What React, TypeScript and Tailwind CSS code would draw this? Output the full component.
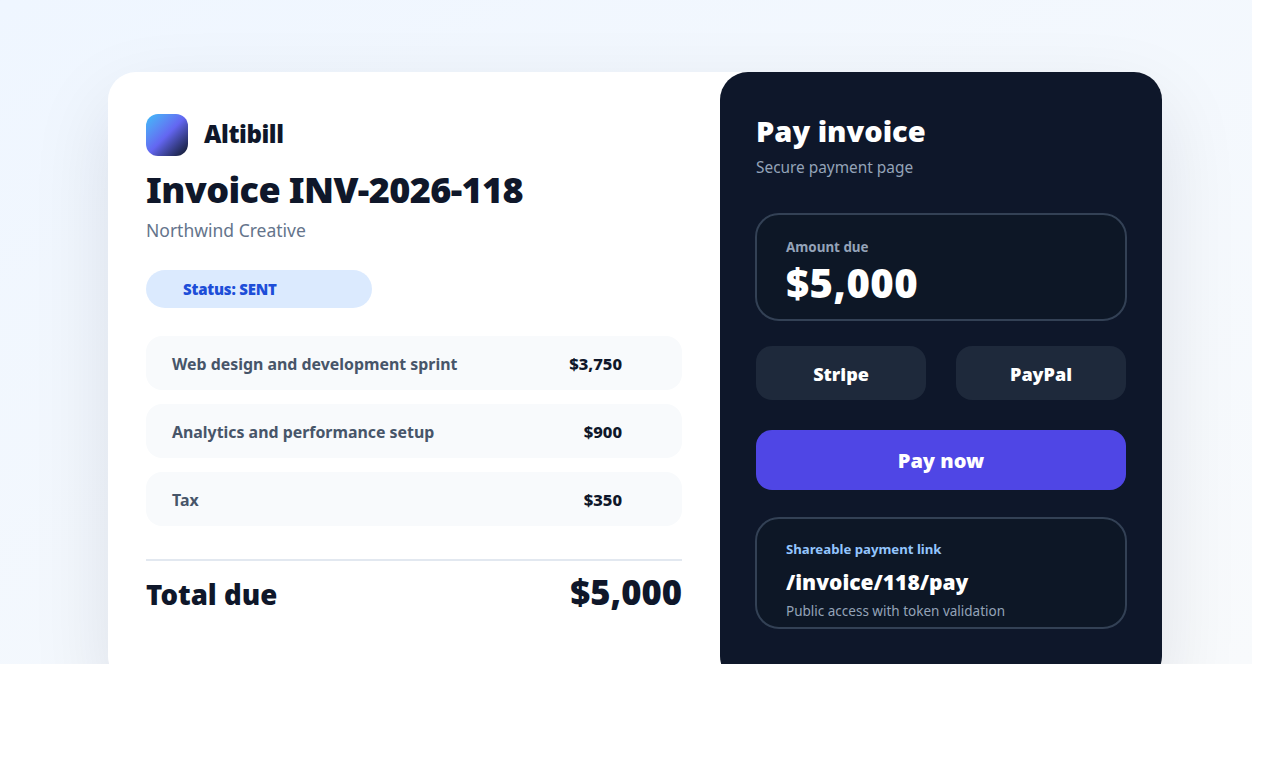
export default function App() {
  const rows = [
    ["Web design and development sprint", "$3,750"],
    ["Analytics and performance setup", "$900"],
    ["Tax", "$350"],
  ];
  return (
    <div className="min-h-[760px] bg-white font-['Noto_Sans',sans-serif]">
      <div className="w-[1252px] h-[664px] overflow-hidden bg-gradient-to-br from-[#eff6ff] to-[#f8fafc] pt-[72px] pl-[108px]">
        <div className="w-[1054px] h-[612px] flex rounded-[28px] bg-white shadow-[0_30px_80px_rgba(15,23,42,0.1)]">
          <div className="w-[612px] pt-[42px] px-[38px]">
            <div className="flex items-center gap-4 h-[42px]">
              <div className="w-[42px] h-[42px] rounded-xl bg-gradient-to-br from-[#38bdf8] via-[#6366f1] to-[#0f172a]" />
              <span className="text-2xl font-black text-[#0f172a] tracking-[-0.4px] -translate-y-px">Altibill</span>
            </div>
            <h1 className="mt-3.5 h-[40px] leading-[40px] text-4xl font-black text-[#0f172a] tracking-[-0.6px]">Invoice INV-2026-118</h1>
            <p className="mt-1.5 text-[17.5px] leading-7 text-[#64748b]">Northwind Creative</p>
            <div className="mt-[26px] w-[226px] h-[38px] rounded-full bg-[#dbeafe] pl-[37px] flex items-center text-[15px] tracking-[-0.2px] font-black text-[#1d4ed8]">Status: SENT</div>
            <div className="mt-7 flex flex-col gap-3.5">
              {rows.map(([a, b]) => (
                <div key={a} className="h-[54px] rounded-2xl bg-[#f8fafc] pl-[26px] pr-[60px] pt-[3px] flex items-center justify-between text-[15.9px] font-bold">
                  <span className="text-[#475569]">{a}</span>
                  <span className="text-[#0f172a] font-extrabold text-[16.6px]">{b}</span>
                </div>
              ))}
            </div>
            <div className="mt-[33px] border-t-2 border-[#e2e8f0] pt-[5px] flex items-baseline justify-between text-[#0f172a] font-black">
              <span className="text-[27.6px]">Total due</span>
              <span className="text-[34.6px]">$5,000</span>
            </div>
          </div>
          <div className="w-[442px] h-[612px] rounded-[28px] bg-[#0e172a] pt-[41px] px-9">
            <h2 className="text-[29px] font-black text-white leading-9">Pay invoice</h2>
            <p className="mt-[7px] text-[15.4px] leading-6 text-[#94a3b8]">Secure payment page</p>
            <div className="-mx-px mt-[33px] h-[108px] rounded-3xl border-2 border-[#334155] bg-[#0d1726] pl-[29px] pt-[24px]">
              <div className="text-[13.4px] leading-4 font-bold text-[#94a3b8]">Amount due</div>
              <div className="mt-px text-[40px] tracking-[0.5px] leading-[54px] font-black text-white">$5,000</div>
            </div>
            <div className="mt-[25px] flex gap-[30px]">
              <div className="w-[170px] h-[54px] rounded-2xl bg-[#1e293b] pt-px flex items-center justify-center text-lg font-black text-white">Stripe</div>
              <div className="w-[170px] h-[54px] rounded-2xl bg-[#1e293b] pt-px flex items-center justify-center text-lg font-black text-white">PayPal</div>
            </div>
            <div className="mt-[30px] h-[60px] rounded-2xl bg-[#4f46e5] pt-px flex items-center justify-center text-xl font-black text-white">Pay now</div>
            <div className="-mx-px mt-[27px] h-[112px] rounded-3xl border-2 border-[#334155] bg-[#0d1726] pl-[29px] pt-[22px]">
              <div className="text-[13.2px] leading-4 font-bold text-[#93c5fd]">Shareable payment link</div>
              <div className="mt-[11px] text-[21px] leading-7 font-black text-white">/invoice/118/pay</div>
              <div className="mt-1.5 text-[13.5px] leading-[18px] text-[#94a3b8]">Public access with token validation</div>
            </div>
          </div>
        </div>
      </div>
    </div>
  );
}
